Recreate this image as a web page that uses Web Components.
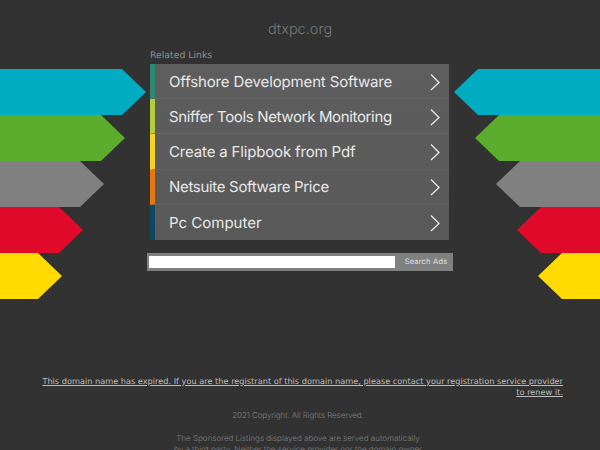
<!DOCTYPE html>
<html>
<head>
<meta charset="utf-8">
<title>dtxpc.org</title>
<style>
  html, body { margin: 0; height: 450px; overflow: hidden; background: #323232; text-rendering: geometricPrecision; }
</style>
</head>
<body>
<parked-page>
  <arrow-stack slot="left" side="left"></arrow-stack>
  <arrow-stack slot="right" side="right"></arrow-stack>
  <link-panel slot="center">
    <link-row color="#2a8a72" tracking="-.14">Offshore Development Software</link-row>
    <link-row color="#b4cd3c" tracking="-.35">Sniffer Tools Network Monitoring</link-row>
    <link-row color="#f6d322" tracking="-.16">Create a Flipbook from Pdf</link-row>
    <link-row color="#e8770f" tracking="-.32">Netsuite Software Price</link-row>
    <link-row color="#0d4a5e" tracking="0">Pc Computer</link-row>
  </link-panel>
  <search-bar slot="center"></search-bar>
</parked-page>

<script>
class ParkedPage extends HTMLElement {
  constructor() {
    super();
    this.attachShadow({ mode: 'open' });
    this.shadowRoot.innerHTML = `
      <style>
        :host { display: block; width: 600px; color: #999; font-family: "Inter", "Liberation Sans", sans-serif; }
        h1 {
          margin: 0; padding-top: 21px; height: 27px;
          font: 300 14.5px/18px "Inter", sans-serif;
          text-align: center; color: #787878;
        }
        .main { display: grid; grid-template-columns: 146px 308px 146px; }
        .center { display: flex; flex-direction: column; }
        .label { height: 16px; padding-left: 4px; font: 400 9.3px/16px "DejaVu Sans", sans-serif; color: #8f8f8f; }
        .side { padding-top: 21px; }
        footer { margin-top: 77px; padding: 0 37px 0 33px; }
        .expired {
          margin: 0; text-align: right;
          font: 400 8.2px/10.5px "DejaVu Sans", sans-serif; color: #bdbdbd;
          text-decoration: underline;
        }
        .copy, .legal {
          text-align: center; font: 300 8px/11px "Inter", sans-serif; color: #808080;
        }
        .copy { margin: 13px 0 0; letter-spacing: -.1px; }
        .legal { margin: 12px auto 0; width: 250px; }
      </style>
      <h1>dtxpc.org</h1>
      <div class="main">
        <div class="side"><slot name="left"></slot></div>
        <div class="center">
          <div class="label">Related Links</div>
          <slot name="center"></slot>
        </div>
        <div class="side"><slot name="right"></slot></div>
      </div>
      <footer>
        <p class="expired">This domain name has expired. If you are the registrant of this domain name, please contact your registration service provider to renew it.</p>
        <p class="copy">2021 Copyright. All Rights Reserved.</p>
        <p class="legal">The Sponsored Listings displayed above are served automatically by a third party. Neither the service provider nor the domain owner maintain any relationship with the advertisers.</p>
      </footer>
    `;
  }
}

class ArrowStack extends HTMLElement {
  constructor() {
    super();
    this.attachShadow({ mode: 'open' });
  }

  connectedCallback() {
    const colors = ['#00acc1', '#5cac2e', '#808080', '#e10a2a', '#ffdb00'];
    const widths = [146, 125, 104, 83, 62];
    const right = this.getAttribute('side') === 'right';
    const bars = colors.map((c, i) => {
      const w = widths[i];
      const pts = right
        ? `0,23 24,0 ${w},0 ${w},46 24,46`
        : `0,0 ${w - 24},0 ${w},23 ${w - 24},46 0,46`;
      return `<svg width="${w}" height="46" viewBox="0 0 ${w} 46"><polygon fill="${c}" points="${pts}"/></svg>`;
    }).join('');
    this.shadowRoot.innerHTML = `
      <style>
        :host { display: flex; flex-direction: column; align-items: ${right ? 'flex-end' : 'flex-start'}; }
        svg { display: block; }
      </style>
      ${bars}
    `;
  }
}

class LinkPanel extends HTMLElement {
  constructor() {
    super();
    this.attachShadow({ mode: 'open' });
    this.shadowRoot.innerHTML = `
      <style>
        :host { display: block; width: 299px; margin-left: 4px; background: linear-gradient(#5e5e5e, #595959); }
      </style>
      <slot></slot>
    `;
  }
}

class LinkRow extends HTMLElement {
  constructor() {
    super();
    this.attachShadow({ mode: 'open' });
  }

  connectedCallback() {
    const color = this.getAttribute('color');
    const tracking = this.getAttribute('tracking') || 0;
    this.shadowRoot.innerHTML = `
      <style>
        :host {
          display: flex; align-items: center; box-sizing: border-box; height: 35.2px;
          border-left: 5px solid ${color}; border-bottom: 1px solid #646464;
          padding: 1px 8px 0 14px; color: #e8e8e8;
          font: 400 15px/20px "Inter", sans-serif; letter-spacing: ${tracking}px;
        }
        :host(:last-child) { border-bottom: none; }
        .text { flex: 1; white-space: nowrap; }
        svg { display: block; }
      </style>
      <span class="text"><slot></slot></span>
      <svg width="12" height="18" viewBox="0 0 12 18"><path d="M2 1.5 L10 9.5 L2 17" fill="none" stroke="#e8e8e8" stroke-width="1.3"/></svg>
    `;
  }
}

class SearchBar extends HTMLElement {
  constructor() {
    super();
    this.attachShadow({ mode: 'open' });
    this.shadowRoot.innerHTML = `
      <style>
        :host {
          display: flex; width: 306px; height: 18px; margin: 13px 0 0 1px;
          background: #808080; box-sizing: border-box;
        }
        .field { width: 246px; height: 12px; margin: 3px 0 3px 2px; background: #fff; }
        .btn { flex: 1; padding-left: 4px; text-align: center; font: 400 7.5px/18px "Inter", sans-serif; color: #e0e0e0; letter-spacing: .2px; }
      </style>
      <div class="field"></div>
      <div class="btn">Search Ads</div>
    `;
  }
}

customElements.define('parked-page', ParkedPage);
customElements.define('arrow-stack', ArrowStack);
customElements.define('link-panel', LinkPanel);
customElements.define('link-row', LinkRow);
customElements.define('search-bar', SearchBar);
</script>
</body>
</html>
